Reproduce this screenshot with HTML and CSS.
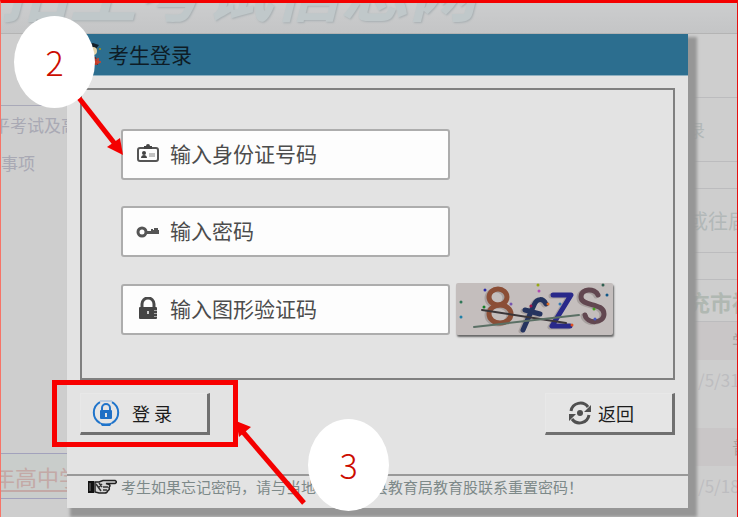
FILE: index.html
```
<!DOCTYPE html>
<html lang="zh-CN">

<head>
  <meta charset="utf-8">
  <meta name="viewport" content="width=device-width, initial-scale=1.0">
  <title>考生登录</title>
  <link rel="stylesheet" href="styles.css">
</head>

<body>
  <div class="page">
    <!-- dimmed page behind the dialog -->
    <header class="banner">
      <span class="banner-title">招生考试信息网</span>
    </header>
    <div class="backdrop">
      <aside class="left-col">
        <div class="left-top"></div>
        <ul class="left-list">
          <li>平考试及高</li>
          <li>事项</li>
        </ul>
        <div class="left-link"><a href="#">年高中学</a></div>
      </aside>
      <aside class="right-col">
        <div class="cell cell-tall"></div>
        <div class="cell cell-tall">录</div>
        <div class="cell cell-gap"></div>
        <div class="cell cell-tall wide">或往届</div>
        <div class="cell cell-gap"></div>
        <div class="cell cell-title">充市福</div>
        <div class="cell row-pink">学</div>
        <div class="cell row-date">/5/31</div>
        <div class="cell row-pink">普</div>
        <div class="cell row-date">/5/18</div>
      </aside>
    </div>

    <form class="dialog" name="loginForm">
      <div class="dialog-head">
        <svg class="student" viewBox="0 0 20 24" width="20" height="24">
          <path d="M0 2L9 0L15 2L12 6H2Z" fill="#14212b"/>
          <circle cx="9" cy="8" r="4" fill="#e3d3a8"/>
          <path d="M15 5h2v2h-2z" fill="#8a8a30"/>
          <path d="M4 14h8l2 8H3z" fill="#6b2c2c"/>
          <path d="M10 19h7M12 16v6M14 15v6" stroke="#d3402a" stroke-width="1.500"/>
        </svg>
        <h1>考生登录</h1>
      </div>

      <div class="fields">
        <div class="field">
          <svg viewBox="0 0 24 24" width="24" height="24">
            <rect x="2" y="5" width="20" height="13" rx="2" fill="none" stroke="#555" stroke-width="2"/>
            <path d="M8 6V3h2a2 2 0 0 1 4 0h2v3z" fill="#444"/>
            <circle cx="8" cy="10" r="2" fill="#444"/>
            <path d="M5 15c0-4 6-4 6 0z" fill="#444"/>
            <path d="M13 11h6M13 13h6" stroke="#888" stroke-width="1"/>
          </svg>
          <input type="text" name="idcard" placeholder="输入身份证号码" aria-label="身份证号码">
        </div>
        <div class="field">
          <svg viewBox="0 0 24 24" width="24" height="24">
            <circle cx="6" cy="12" r="4" fill="none" stroke="#555" stroke-width="3"/>
            <path d="M10 11h5V9h2v1h1V8h4v2h1v4H10z" fill="#555"/>
          </svg>
          <input type="password" name="password" placeholder="输入密码" aria-label="密码">
        </div>
        <div class="captcha-row">
          <div class="field">
            <svg viewBox="0 0 24 24" width="24" height="24">
              <path d="M6 11V7a6 6 0 0 1 12 0v4" fill="none" stroke="#4a4a4a" stroke-width="3"/>
              <rect x="3" y="10" width="18" height="12" rx="1" fill="#444"/>
              <path d="M18 13.500h3M18 16.500h3M18 19.500h3" stroke="#aaa" stroke-width="1"/>
              <path d="M12 14v3" stroke="#ccc" stroke-width="2"/>
            </svg>
            <input type="text" name="captcha" placeholder="输入图形验证码" aria-label="图形验证码">
          </div>
          <svg class="captcha" viewBox="0 0 157 52" width="157" height="52" role="img" aria-label="验证码">
            <g fill="none" stroke-linecap="round" stroke-linejoin="round">
              <g stroke="#8a8181" stroke-width="5" opacity=".5" transform="translate(-2 1)">
                <ellipse cx="42" cy="14" rx="9" ry="8"/><ellipse cx="44" cy="31" rx="11" ry="9"/>
                <path d="M90 21C87 15 81 15 78 22L67 47M69 27L84 31"/>
                <path d="M97 12H115L96 43H114"/>
                <path d="M142 12C139 5 125 5 125 14C125 24 148 19 148 31C148 41 131 41 129 32"/>
              </g>
              <g stroke="#8b4e36" stroke-width="5">
                <ellipse cx="42" cy="14" rx="9" ry="8"/><ellipse cx="44" cy="31" rx="11" ry="9"/>
              </g>
              <path d="M90 21C87 15 81 15 78 22L67 47M69 27L84 31" stroke="#25345f" stroke-width="5"/>
              <path d="M97 12H115L96 43H114" stroke="#29298a" stroke-width="5"/>
              <path d="M142 12C139 5 125 5 125 14C125 24 148 19 148 31C148 41 131 41 129 32" stroke="#624750" stroke-width="5"/>
              <path d="M26 27L110 40" stroke="#3b3639" stroke-width="2"/>
              <path d="M18 44L123 32" stroke="#5b7065" stroke-width="2"/>
            </g>
            <g fill="#2c2ca8">
              <circle cx="29" cy="7" r="1.500"/><circle cx="55" cy="21" r="1.500" fill="#7656b0"/>
              <circle cx="28" cy="24" r="1.500" fill="#168026"/><circle cx="82" cy="2" r="1.500" fill="#98a814"/>
              <circle cx="83" cy="8" r="1.500" fill="#b04cb0"/><circle cx="75" cy="23" r="1.500" fill="#a01448"/>
              <circle cx="92" cy="21" r="1.500" fill="#e06c22"/><circle cx="104" cy="21" r="1.500" fill="#3478b0"/>
              <circle cx="116" cy="42" r="1.500" fill="#e05020"/><circle cx="138" cy="26" r="1.500" fill="#48a020"/>
              <circle cx="139" cy="36" r="1.500" fill="#4858c0"/><circle cx="151" cy="12" r="1.500" fill="#105888"/>
              <circle cx="147" cy="2" r="1.500" fill="#306050"/><circle cx="5" cy="19" r="1.500" fill="#307858"/>
              <circle cx="5" cy="34" r="1.500" fill="#2080a8"/>
            </g>
          </svg>
        </div>
      </div>

      <div class="buttons">
        <button type="button" class="btn btn-login">
          <svg viewBox="0 0 28 28" width="28" height="28">
            <path d="M8 3A12 12 0 0 0 8 24M20 3A12 12 0 0 1 20 24" fill="none" stroke="#1f74cb" stroke-width="2"/>
            <path d="M8 2h12" stroke="#8fb4dd" stroke-width="1"/>
            <path d="M7 23q7 3 14 0l-3 4h-8z" fill="#1f74cb"/>
            <path d="M10 11V9a4 4 0 0 1 8 0v2" fill="none" stroke="#1f74cb" stroke-width="2"/>
            <rect x="8" y="11" width="12" height="9" rx="1" fill="#1f6fc5"/>
            <path d="M14 14v4" stroke="#e3e3e3" stroke-width="2"/>
          </svg>
          <span>登 录</span>
        </button>
        <button type="button" class="btn btn-back">
          <svg viewBox="0 0 24 24" width="24" height="24">
            <path d="M3 10A9.500 9.500 0 0 1 20 6M21 14A9.500 9.500 0 0 1 4 18" fill="none" stroke="#505050" stroke-width="3"/>
            <path d="M23 4v7h-7zM1 20v-7h7z" fill="#505050"/>
            <circle cx="12" cy="12" r="3" fill="#505050"/>
          </svg>
          <span>返回</span>
        </button>
      </div>

      <div class="dialog-foot">
        <svg viewBox="0 0 30 16" width="30" height="16">
          <path d="M1 2h6v12H1z" fill="#111"/>
          <path d="M3 4v8" stroke="#777" stroke-width="1"/>
          <path d="M8 3h4l4-1.500h12q3 1.500 0 3h-9l3 1q2 1 0 3q1 2-1 3q-1 3-4 2.500h-5l-4-1z" fill="#d4d4d4" stroke="#222" stroke-width="1.500"/>
          <path d="M9 5l5 7M12 4l3 4M15 5l-3 3M16 8h5M16 11h4" fill="none" stroke="#333" stroke-width="1.500"/>
        </svg>
        <p><span class="tip-start">考生如果忘记密码，请与当地</span><span>县教育局教育股联系重置密码！</span></p>
      </div>
    </form>

    <!-- step marks -->
    <div class="mark-box"></div>
    <svg class="mark-arrows" viewBox="0 0 320 517" width="320" height="517">
      <g stroke="#f40000" stroke-width="5">
        <path d="M79 98L115 144"/>
        <path d="M304 503L243 432"/>
      </g>
      <path d="M123 155L107 147L120 138Z" fill="#f40000"/>
      <path d="M236 421L251 427L239 437Z" fill="#f40000"/>
    </svg>
    <div class="mark mark-2">2</div>
    <div class="mark mark-3">3</div>
  </div>
</body>

</html>
```
FILE: styles.css
```
* {
  box-sizing: border-box;
}

body {
  margin: 0;
  font-family: "Noto Sans CJK SC", "Noto Sans", sans-serif;
  background: #cecece;
}

.page {
  position: relative;
  display: flex;
  flex-direction: column;
  height: 100vh;
  overflow: hidden;
  border-top: 3px solid #f40000;
  border-right: 1px solid #e60f0f;
  border-left: 1px solid #f77468;
}

/* page behind */
.banner {
  display: flex;
  align-items: flex-end;
  flex: none;
  height: 31px;
  padding-bottom: 16px;
  overflow: hidden;
  background: linear-gradient(#cccdce, #c4c5c6);
  border-bottom: 1px solid #b4b4b4;
}

.banner-title {
  font-size: 68px;
  line-height: 60px;
  font-weight: bold;
  font-style: italic;
  white-space: nowrap;
  color: #c0c8ca;
  text-shadow: 1px 1px 2px #a9b0b3;
}

.backdrop {
  display: flex;
  justify-content: space-between;
  flex: 1;
  min-height: 0;
}

.left-col {
  width: 66px;
  overflow: hidden;
  white-space: nowrap;
}

.left-top {
  height: 72px;
  border-bottom: 1px solid #a9a9b8;
}

.left-list {
  height: 347px;
  margin: 0;
  padding: 0;
  list-style: none;
  font-size: 17px;
  line-height: 38px;
  color: #a9a9b4;
}

.left-list li:first-child {
  margin-left: -8px;
}

.left-link {
  height: 46px;
  border: 1px solid #a2a2bc;
  border-width: 1px 0;
  background: #c9cdcb;
  font-size: 22px;
  line-height: 44px;
}

.left-link a {
  margin-left: -8px;
  color: #c3a9a6;
  text-underline-offset: 4px;
}

.right-col {
  width: 49px;
  overflow: hidden;
  white-space: nowrap;
  color: #b2b8b8;
}

.cell {
  border-bottom: 1px solid #bcbcbe;
  font-size: 17px;
}

.cell-tall {
  height: 64px;
  line-height: 64px;
}

.cell-tall.wide {
  font-size: 20px;
}

.cell-gap {
  height: 27px;
}

.cell-title {
  height: 42px;
  font-size: 22px;
  font-weight: bold;
  line-height: 42px;
  color: #b0b8b2;
}

.row-pink {
  height: 38px;
  padding-left: 44px;
  border: 0;
  background: #c9c6c7;
  font-size: 17px;
  line-height: 38px;
  color: #a5a5a5;
}

.row-date {
  height: 68px;
  padding-left: 10px;
  border: 0;
  font-size: 17px;
  line-height: 40px;
  color: #bdbdc0;
}

/* login dialog */
.dialog {
  position: absolute;
  top: 31px;
  right: 49px;
  left: 66px;
  display: flex;
  flex-direction: column;
  background: #e3e3e3;
  box-shadow: 6px 6px 3px 3px #969696;
}

.dialog-head {
  display: flex;
  align-items: center;
  gap: 4px;
  height: 42px;
  padding-left: 17px;
  background: #2c6e8f;
  border-bottom: 1px solid #8fb0c0;
}

.dialog-head h1 {
  margin: 0;
  padding-bottom: 2px;
  font-size: 21px;
  line-height: 38px;
  font-weight: normal;
  color: #0e1c26;
}

.fields {
  display: flex;
  flex-direction: column;
  gap: 26px;
  margin: 12px 13px 0;
  padding: 39px 39px 43px;
  border: 2px solid #808080;
}

.field {
  display: flex;
  align-items: center;
  gap: 10px;
  width: 329px;
  height: 51px;
  padding-left: 13px;
  background: #fdfdfd;
  border: 2px solid #adadad;
  border-radius: 3px;
}

.field svg {
  flex: none;
}

.field input {
  flex: 1;
  min-width: 0;
  height: 44px;
  padding: 0 0 3px;
  border: 0;
  outline: 0;
  background: transparent;
  font-family: inherit;
  font-size: 21px;
  color: #444;
}

.field input::placeholder {
  color: #4c4c4c;
  opacity: 1;
}

.captcha-row {
  display: flex;
  align-items: center;
  gap: 6px;
}

.captcha {
  flex: none;
  border-radius: 2px;
  background: #c4bebd;
  box-shadow: 1px 2px 2px #666;
}

.buttons {
  display: flex;
  justify-content: space-between;
  margin: 13px 13px 39px;
}

.btn {
  display: flex;
  align-items: center;
  width: 130px;
  height: 42px;
  padding: 0;
  border: solid;
  border-width: 1px 3px 3px 1px;
  border-color: #e8e8e8 #707070 #707070 #e8e8e8;
  background: #e5e5e5;
  font-family: inherit;
  font-size: 18px;
  color: #1c1c1c;
}

.btn-login {
  gap: 12px;
  padding-left: 11px;
}

.btn-back {
  gap: 6px;
  padding-left: 22px;
}

.dialog-foot {
  display: flex;
  align-items: center;
  gap: 4px;
  height: 34px;
  padding: 0 0 11px 20px;
  border-top: 2px solid #999;
}

.dialog-foot svg {
  flex: none;
}

.dialog-foot p {
  display: flex;
  margin: 0;
  font-size: 15px;
  line-height: 20px;
  white-space: nowrap;
  color: #7d8989;
}

.tip-start {
  width: 252px;
}

/* step marks */
.mark {
  position: absolute;
  display: flex;
  align-items: center;
  justify-content: center;
  width: 81px;
  height: 92px;
  border-radius: 50%;
  background: #fff;
  font-size: 34px;
  font-weight: 300;
  line-height: 40px;
  color: #cc0c00;
}

.mark-2 {
  top: 13px;
  left: 13px;
}

.mark-3 {
  top: 416px;
  left: 307px;
}

.mark-box {
  position: absolute;
  top: 377px;
  left: 51px;
  width: 186px;
  height: 67px;
  border: 5px solid #f80000;
}

.mark-arrows {
  position: absolute;
  top: -3px;
  left: -1px;
}
```
